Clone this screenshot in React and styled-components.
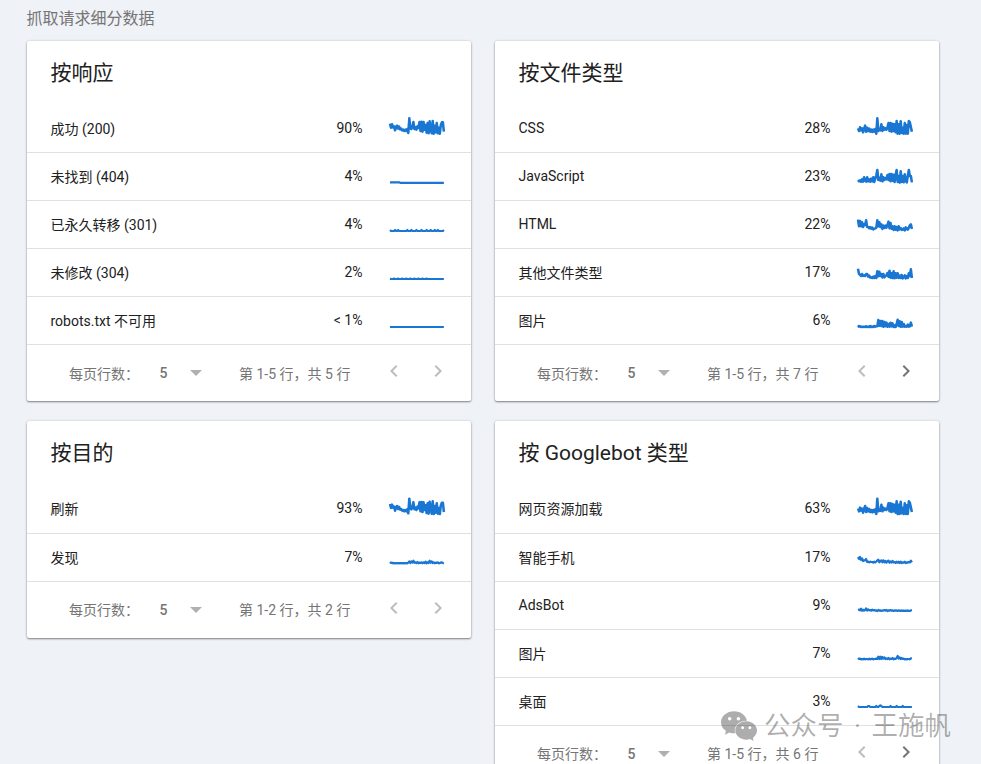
import React from 'react'
import styled, { createGlobalStyle } from 'styled-components';
import { MdChevronLeft, MdChevronRight } from 'react-icons/md';
import { SiWechat } from 'react-icons/si';

const GlobalStyle = createGlobalStyle`
    * {
        box-sizing: border-box;
    }

    body {
        margin: 0;
        height: 764px;
        overflow: hidden;
        background: #eff2f7;
        color: #212121;
        font-family: Roboto, "Noto Sans CJK SC", sans-serif;
        font-size: 14px;
    }
`

const Page = styled.main`
    width: 981px;
    height: 764px;
    overflow: hidden;
    padding: 9px 0 0 27px;
`

const PageTitle = styled.h1`
    margin: 0 0 12px -0.5px;
    height: 20px;
    line-height: 20px;
    font-size: 16px;
    font-weight: 400;
    color: #757575;
`

const CardGrid = styled.div`
    display: grid;
    grid-template-columns: 444px 444px;
    gap: 20px 24px;
    align-items: start;
`

const Card = styled.section`
    background: #fff;
    border-radius: 2px;
    box-shadow: 0 1px 2px rgba(0, 0, 0, 0.45), 0 0 3px rgba(0, 0, 0, 0.12);
`

const CardTitle = styled.h2`
    margin: 0;
    padding-left: 23.5px;
    height: 64px;
    line-height: 65px;
    font-size: 21px;
    font-weight: 400;
`

const Row = styled.div`
    display: flex;
    align-items: center;
    height: ${props => props.$tall ? 49 : 48}px;
    padding: 0 25px 0 23.5px;
    padding-bottom: ${props => props.$tall ? 1 : 0}px;
    border-bottom: 1px solid #e0e0e0;
`

const Label = styled.span`
    flex: 1;
    line-height: 20px;
    padding-bottom: ${props => props.$latin ? 2 : 0}px;
`

const Percent = styled.span`
    line-height: 20px;
    padding-bottom: 2px;
    margin-right: 25.5px;
`

const Chart = styled.svg`
    width: 58px;
    height: 20px;
    margin-top: -3px;
    overflow: visible;

    polyline {
        fill: none;
        stroke: #1976d2;
        stroke-width: ${props => props.$bold ? 7.6 : 6.6};
        stroke-linejoin: round;
    }
`

const Footer = styled.div`
    display: flex;
    align-items: center;
    height: 56px;
    padding-left: 42px;
    color: #757575;
`

const PerPage = styled.span`
    width: 90.5px;
    line-height: 20px;
    padding-top: ${props => props.$low ? 1 : 0}px;
`

const PageSize = styled.div`
    display: flex;
    align-items: center;
    width: 79.5px;
    font-weight: 500;
`

const Caret = styled.span`
    margin-left: 23px;
    border: 6px solid transparent;
    border-top-color: #b0b0b0;
    border-bottom: 0;
`

const Range = styled.span`
    width: 143px;
    line-height: 20px;
    padding-top: ${props => props.$low ? 1 : 0}px;
`

const PageButton = styled.button`
    display: flex;
    width: 24px;
    height: 24px;
    margin: -4px 20px 0 0;
    padding: 0;
    border: 0;
    background: none;
    color: ${props => props.disabled ? '#bdbdbd' : '#757575'};
`

const Watermark = styled.div`
    position: absolute;
    left: 721px;
    top: 708px;
    display: flex;
    align-items: center;
    height: 36px;
    font-size: 26.5px;
    line-height: 36px;
    white-space: pre;
    color: rgba(0, 0, 0, 0.32);

    svg {
        margin-right: 7px;
    }
`

const Dot = styled.span`
    width: 28px;
    text-align: center;
`

// y values in thirds of a pixel, one point every 3 units
const busy = [20,32,22,31,28,40,29,26,35,29,37,35,40,38,42,38,42,36,48,4,33,36,30,15,36,31,38,28,33,15,42,14,44,15,38,24,47,18,49,13,36,49,12,50,26,46,18,49,32,50,24,16,16,44];
const assets = [34,42,31,40,34,46,35,26,44,32,42,35,44,38,45,38,44,36,50,4,42,36,40,22,42,31,38,34,38,31,18,42,18,44,20,42,22,46,12,50,22,50,13,48,32,50,18,50,24,50,12,16,30,44];
const scripts = [42,46,43,47,40,47,34,44,47,34,46,40,47,38,46,34,48,38,28,12,42,35,44,25,46,34,42,36,40,27,42,24,46,24,44,26,48,28,12,48,30,50,16,48,30,49,25,44,49,30,12,30,30,49];
const html = [14,34,18,34,22,36,28,30,16,36,36,40,36,41,38,43,41,40,38,16,34,22,36,28,42,32,39,32,38,30,20,40,24,41,34,45,34,44,36,46,34,43,39,45,43,40,46,37,42,44,38,31,28,42];
const other = [18,34,36,40,34,40,38,40,34,34,42,39,45,44,46,42,46,40,46,26,41,27,40,34,44,34,44,40,38,31,42,24,45,32,46,26,47,32,45,32,46,39,46,37,47,44,38,47,40,46,32,40,20,46];
const images = [44,48,47,49,48,49,48,49,47,49,48,49,46,49,48,49,46,48,47,47,28,45,31,46,31,48,34,47,36,48,40,48,36,47,38,49,44,49,40,27,46,32,48,34,48,40,48,46,48,42,48,47,36,48];
const phone = [34,40,34,43,38,46,44,44,40,49,48,50,48,49,49,51,48,50,48,44,42,50,46,44,50,44,50,46,51,46,45,51,47,51,46,50,49,52,48,51,48,52,48,52,50,51,48,52,50,51,49,50,45,50];
const flat = Array(54).fill(54);
const wobble = (...bumps) => flat.map((y, i) => bumps.includes(i) ? y - 3 : y);
const shift = (values, dy) => values.map(y => y + dy);

const cards = [
    {
        title: '按响应',
        total: 5,
        rows: [
            ['成功 (200)', '90%', busy],
            ['未找到 (404)', '4%', flat.map((y, i) => i < 10 ? y - 2 : y - 0.5)],
            ['已永久转移 (301)', '4%', wobble(0, 5, 8, 17, 21, 26, 31, 36, 40, 44, 47, 53)],
            ['未修改 (304)', '2%', flat.map((y, i) => i % 4 === 0 && i < 38 ? y - 1 : y)],
            ['robots.txt 不可用', '< 1%', flat],
        ],
    },
    {
        title: '按文件类型',
        total: 7,
        rows: [
            ['CSS', '28%', assets],
            ['JavaScript', '23%', shift(scripts, 3)],
            ['HTML', '22%', shift(html, 6)],
            ['其他文件类型', '17%', shift(other, 5)],
            ['图片', '6%', shift(images, 5)],
        ],
    },
    {
        title: '按目的',
        total: 2,
        second: true,
        rows: [
            ['刷新', '93%', shift(busy, 1)],
            ['发现', '7%', [48,51,50,52,51,52,51,52,51,52,51,52,51,52,51,52,51,52,50,46,51,46,50,44,50,49,51,48,52,50,51,49,52,49,51,47,52,49,51,44,50,46,51,49,52,50,51,49,52,51,50,49,51,52]],
        ],
    },
    {
        title: '按 Googlebot 类型',
        total: 6,
        second: true,
        rows: [
            ['网页资源加载', '63%', shift(assets, 1)],
            ['智能手机', '17%', shift(phone, -1)],
            ['AdsBot', '9%', [48,47,49,44,50,47,50,48,43,50,46,49,48,50,47,49,48,50,49,51,48,50,49,51,50,49,48,50,48,51,49,50,48,50,49,51,49,50,49,51,49,50,51,49,51,50,51,50,51,49,51,51,49,48]],
            ['图片', '7%', [48,51,50,52,51,52,50,52,51,51,52,50,52,51,50,52,51,51,50,51,44,51,44,51,45,50,46,51,49,51,48,52,50,51,48,52,50,51,48,42,50,46,51,48,51,50,52,51,52,51,51,52,49,50]],
            ['桌面', '3%', shift(wobble(0, 10, 11, 18, 21, 22, 23, 32, 38, 44), -3).map((y, i) => i === 22 ? 46 : y)],
        ],
    },
];

function Sparkline({ values }) {
    const range = Math.max(...values) - Math.min(...values);
    return (
        <Chart viewBox="0 0 174 60" $bold={range > 20}>
            <polyline points={values.map((y, i) => `${6 + i * 3.05},${y}`).join(' ')} />
        </Chart>
    )
}

function BreakdownCard({ title, total, rows, second }) {
    return (
        <Card>
            <CardTitle>{title}</CardTitle>
            {rows.map(([label, percent, values], i) => (
                <Row key={label} $tall={second && i === 0}>
                    <Label $latin={/^[A-Za-z]+$/.test(label)}>{label}</Label>
                    <Percent>{percent}</Percent>
                    <Sparkline values={values} />
                </Row>
            ))}
            <Footer>
                <PerPage $low={!second}>每页行数：</PerPage>
                <PageSize>5<Caret /></PageSize>
                <Range $low={!second}>第 1-{rows.length} 行，共 {total} 行</Range>
                <PageButton disabled><MdChevronLeft size={24} /></PageButton>
                <PageButton disabled={total <= 5}><MdChevronRight size={24} /></PageButton>
            </Footer>
        </Card>
    )
}

export default function App () {
    return (
        <Page>
            <GlobalStyle />
            <PageTitle>抓取请求细分数据</PageTitle>
            <CardGrid>
                {cards.map(card => <BreakdownCard key={card.title} {...card} />)}
            </CardGrid>
            <Watermark>
                <SiWechat size={36} />
                <span>公众号</span>
                <Dot>·</Dot>
                <span>王施帆</span>
            </Watermark>
        </Page>
    )
}
